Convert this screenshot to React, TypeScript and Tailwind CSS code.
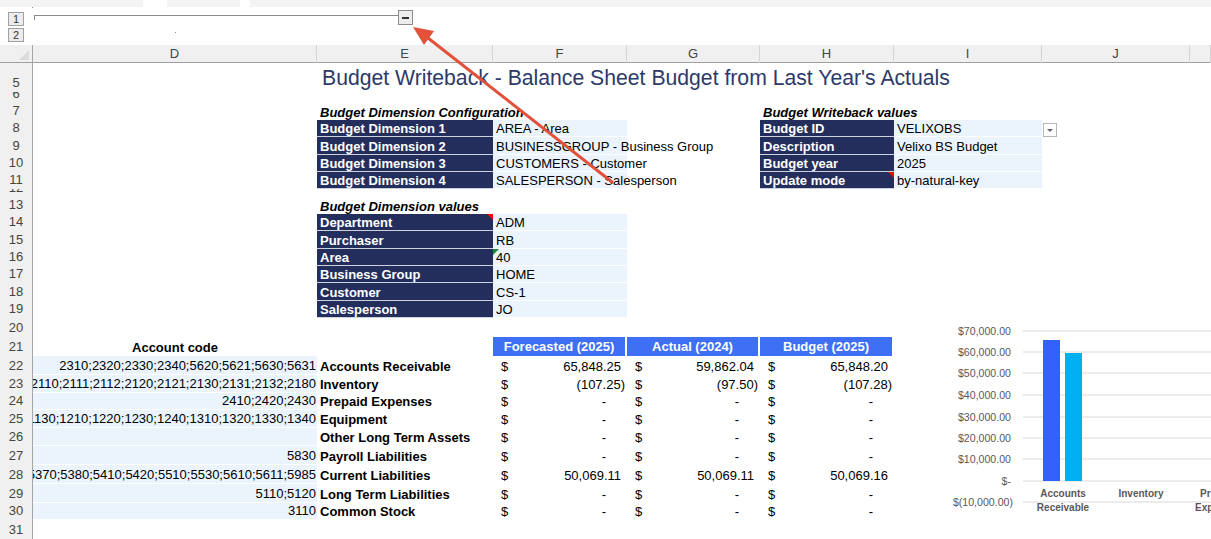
import React from 'react';

const COLS = 'grid grid-cols-[33px_284px_176px_134px_133px_134px_148px_148px_21px]';

// one spreadsheet row: row-number cell + whatever cells are passed in
function Row({ n, h, children }: { n: number; h: string; children?: React.ReactNode }) {
  return (
    <div className={`${COLS} ${h}`}>
      <div className="col-start-1 row-start-1 flex items-end justify-center overflow-hidden bg-[#f0f0f0] border-r border-[#a6a6a6] text-[13px] leading-[16px] text-[#444]">
        <span className="pb-[1px]">{n}</span>
      </div>
      {children}
    </div>
  );
}

function Dark({ col, children, note }: { col: string; children: React.ReactNode; note?: boolean }) {
  return (
    <div className={`${col} row-start-1 relative flex items-end overflow-hidden whitespace-nowrap bg-[#232e5c] border-b border-[#cdd1dc] px-[3px] text-[13px] leading-[15px] font-bold text-white`}>
      {children}
      {note && <span className="absolute right-0 top-0 h-0 w-0 border-l-[6px] border-t-[6px] border-l-transparent border-t-[#ff0000]" />}
    </div>
  );
}

function Val({ col, children, green }: { col: string; children: React.ReactNode; green?: boolean }) {
  return (
    <div className={`${col} row-start-1 relative flex items-end whitespace-nowrap bg-[#ebf4fd] border-b border-white px-[3px] text-[13px] leading-[15px] text-black`}>
      {children}
      {green && <span className="absolute left-0 top-0 h-0 w-0 border-r-[6px] border-t-[6px] border-r-transparent border-t-[#1e8a3a]" />}
    </div>
  );
}

function Heading({ col, children }: { col: string; children: React.ReactNode }) {
  return (
    <div className={`${col} row-start-1 flex items-end whitespace-nowrap px-[3px] text-[13px] leading-[15px] font-bold italic text-black`}>
      {children}
    </div>
  );
}

function Money({ col, v }: { col: string; v: string }) {
  const pad = v === '-' ? 'pr-[21px]' : v.startsWith('(') ? 'pr-[2px]' : 'pr-[6px]';
  return (
    <div className={`${col} row-start-1 flex items-end justify-between pl-[8px] pb-[1px] text-[13px] leading-[15px] text-black`}>
      <span>$</span>
      <span className={pad}>{v}</span>
    </div>
  );
}

const config = [
  ['Budget Dimension 1', 'AREA - Area'],
  ['Budget Dimension 2', 'BUSINESSGROUP - Business Group'],
  ['Budget Dimension 3', 'CUSTOMERS - Customer'],
  ['Budget Dimension 4', 'SALESPERSON - Salesperson'],
];

const writeback = [
  ['Budget ID', 'VELIXOBS'],
  ['Description', 'Velixo BS Budget'],
  ['Budget year', '2025'],
  ['Update mode', 'by-natural-key'],
];

const dims = [
  ['Department', 'ADM'],
  ['Purchaser', 'RB'],
  ['Area', '40'],
  ['Business Group', 'HOME'],
  ['Customer', 'CS-1'],
  ['Salesperson', 'JO'],
];

const accounts = [
  { code: '2310;2320;2330;2340;5620;5621;5630;5631', name: 'Accounts Receivable', f: '65,848.25', a: '59,862.04', b: '65,848.20' },
  { code: '2110;2111;2112;2120;2121;2130;2131;2132;2180', name: 'Inventory', f: '(107.25)', a: '(97.50)', b: '(107.28)' },
  { code: '2410;2420;2430', name: 'Prepaid Expenses', f: '-', a: '-', b: '-' },
  { code: '1130;1210;1220;1230;1240;1310;1320;1330;1340', name: 'Equipment', f: '-', a: '-', b: '-' },
  { code: '', name: 'Other Long Term Assets', f: '-', a: '-', b: '-' },
  { code: '5830', name: 'Payroll Liabilities', f: '-', a: '-', b: '-' },
  { code: '5370;5380;5410;5420;5510;5530;5610;5611;5985', name: 'Current Liabilities', f: '50,069.11', a: '50,069.11', b: '50,069.16' },
  { code: '5110;5120', name: 'Long Term Liabilities', f: '-', a: '-', b: '-' },
  { code: '3110', name: 'Common Stock', f: '-', a: '-', b: '-' },
];

const configHeights = ['h-[17px]', 'h-[18px]', 'h-[17px]', 'h-[17px]'];
const dimHeights = ['h-[17px]', 'h-[18px]', 'h-[17px]', 'h-[17px]', 'h-[18px]', 'h-[17px]'];
const accHeights = ['h-[19px]', 'h-[18px]', 'h-[17px]', 'h-[18px]', 'h-[18px]', 'h-[19px]', 'h-[19px]', 'h-[19px]', 'h-[17px]'];

function Chart() {
  const ticks = [
    ['$70,000.00', 331],
    ['$60,000.00', 352],
    ['$50,000.00', 373],
    ['$40,000.00', 395],
    ['$30,000.00', 417],
    ['$20,000.00', 438],
    ['$10,000.00', 459],
    ['$-', 481],
    ['$(10,000.00)', 502],
  ] as const;
  return (
    <svg className="absolute left-[940px] top-[318px] pointer-events-none" width="271" height="221">
      <g transform="translate(-940,-318)" fontFamily="Liberation Sans, Arial, sans-serif">
        {ticks.map(([t, y]) => (
          <g key={t}>
            <line x1="1023" x2="1211" y1={y} y2={y} stroke="#d9d9d9" strokeWidth="1" />
            <text x={t === '$(10,000.00)' ? 1013 : 1011} y={y + 3.5} textAnchor="end" fontSize="10.6" fill="#595959">
              {t}
            </text>
          </g>
        ))}
        <rect x="1043" y="340" width="17" height="141" fill="#3461fd" />
        <rect x="1065" y="353" width="17" height="128" fill="#00b0f0" />
        <g fontSize="10" fontWeight="bold" fill="#595959">
          <text x="1063" y="497" textAnchor="middle">Accounts</text>
          <text x="1063" y="511" textAnchor="middle">Receivable</text>
          <text x="1141" y="497" textAnchor="middle">Inventory</text>
          <text x="1200" y="497">Pr</text>
          <text x="1195" y="511">Exp</text>
        </g>
      </g>
    </svg>
  );
}

function Arrow() {
  return (
    <svg className="absolute left-0 top-0 pointer-events-none" width="1211" height="539">
      <line x1="612" y1="182" x2="428" y2="38" stroke="#e4513b" strokeWidth="3" strokeLinecap="round" />
      <polygon points="413,27 434,31 424,45" fill="#e4513b" />
    </svg>
  );
}

export default function App() {
  return (
    <div className="relative w-[1211px] h-[539px] overflow-hidden bg-white font-['Liberation_Sans',Arial,sans-serif] text-black">
      {/* app chrome remnant */}
      <div className="flex h-[7px] bg-[#f3f3f3]">
        <div className="w-[143px]" />
        <div className="w-[24px] bg-white" />
        <div className="w-[73px]" />
        <div className="w-[10px] bg-white" />
        <div className="flex-1" />
      </div>

      {/* outline bar */}
      <div className="flex h-[38px]">
        <div className="w-[33px] flex flex-col items-start pl-[8px] pt-[5px] gap-[2px]">
          <div className="flex h-[14px] w-[16px] items-center justify-center border border-[#a0a0a0] bg-[#ececec] text-[11px] leading-none text-[#333]">1</div>
          <div className="flex h-[14px] w-[16px] items-center justify-center border border-[#a0a0a0] bg-[#ececec] text-[11px] leading-none text-[#333]">2</div>
        </div>
        <div className="flex items-start pt-[3px]">
          <div className="mt-[5px] ml-[1px] h-[5px] w-[364px] border-t border-l border-[#8c8c8c]" />
          <div className="flex h-[15px] w-[15px] items-center justify-center border border-[#8c8c8c] bg-[#ececec]">
            <div className="h-[2px] w-[7px] bg-[#333]" />
          </div>
        </div>
      </div>

      {/* column headers */}
      <div className={`${COLS} h-[18px] bg-[#f0f0f0] border-b border-[#a0a0a0] text-[13px] leading-[18px] text-[#444]`}>
        <div className="relative border-r border-[#a6a6a6]">
          <span className="absolute right-[3px] bottom-[3px] h-0 w-0 border-l-[10px] border-b-[10px] border-l-transparent border-b-[#dcdcdc]" />
        </div>
        {['D', 'E', 'F', 'G', 'H', 'I', 'J', ''].map((c, i) => (
          <div key={i} className="flex justify-center border-r border-[#d4d4d4]">{c}</div>
        ))}
      </div>

      <Row n={5} h="h-[29px]">
        <div className="col-start-3 col-span-6 row-start-1 flex items-end whitespace-nowrap pl-[5px] pb-[2px] text-[21.2px] leading-[24px] text-[#2c3a6a]">
          Budget Writeback - Balance Sheet Budget from Last Year's Actuals
        </div>
      </Row>
      <Row n={6} h="h-[11px]" />
      <Row n={7} h="h-[17px]">
        <Heading col="col-start-3 col-span-2">Budget Dimension Configuration</Heading>
        <Heading col="col-start-6 col-span-2">Budget Writeback values</Heading>
      </Row>
      {config.map(([label, value], i) => (
        <Row key={label} n={8 + i} h={configHeights[i]}>
          <Dark col="col-start-3">{label}</Dark>
          <Val col="col-start-4">{value}</Val>
          <Dark col="col-start-6" note={i === 3}>{writeback[i][0]}</Dark>
          <Val col="col-start-7">{writeback[i][1]}</Val>
          {i === 0 && (
            <div className="col-start-8 row-start-1 pl-[1px] pt-[3px]">
              <div className="flex h-[14px] w-[14px] items-center justify-center border border-[#b5b5b5] bg-white">
                <span className="h-0 w-0 border-x-[3px] border-t-[3px] border-x-transparent border-t-[#666]" />
              </div>
            </div>
          )}
        </Row>
      ))}
      <Row n={12} h="h-[8px]" />
      <Row n={13} h="h-[17px]">
        <Heading col="col-start-3 col-span-2">Budget Dimension values</Heading>
      </Row>
      {dims.map(([label, value], i) => (
        <Row key={label} n={14 + i} h={dimHeights[i]}>
          <Dark col="col-start-3" note={i === 0}>{label}</Dark>
          <Val col="col-start-4" green={i === 2}>{value}</Val>
        </Row>
      ))}
      <Row n={20} h="h-[19px]" />
      <Row n={21} h="h-[19px]">
        <div className="col-start-2 row-start-1 flex items-end justify-center pb-[1px] text-[13px] leading-[15px] font-bold">Account code</div>
        {['Forecasted (2025)', 'Actual (2024)', 'Budget (2025)'].map((t, i) => (
          <div
            key={t}
            className={`${i === 0 ? 'col-start-4' : i === 1 ? 'col-start-5' : 'col-start-6'} row-start-1 flex items-end justify-center bg-[#3e6ff4] border-r-2 border-white pb-[2px] text-[13px] leading-[15px] font-bold text-white`}
          >
            {t}
          </div>
        ))}
      </Row>
      {accounts.map((a, i) => (
        <Row key={a.name} n={22 + i} h={accHeights[i]}>
          <div className="col-start-2 row-start-1 flex items-end justify-end overflow-hidden whitespace-nowrap bg-[#ebf4fd] border-b border-white pr-[1px] pb-[1px] text-[13px] leading-[15px]">
            {a.code}
          </div>
          <div className="col-start-3 row-start-1 flex items-end whitespace-nowrap px-[3px] pb-[1px] text-[13px] leading-[15px] font-bold">
            {a.name}
          </div>
          <Money col="col-start-4" v={a.f} />
          <Money col="col-start-5" v={a.a} />
          <Money col="col-start-6" v={a.b} />
        </Row>
      ))}
      <Row n={31} h="h-[19px]" />

      <span className="absolute left-[175px] top-[32px] h-[1px] w-[1px] bg-[#888]" />
      <span className="absolute left-[32px] top-[7px] h-[1px] w-[1px] bg-[#888]" />

      <Chart />
      <Arrow />
    </div>
  );
}
